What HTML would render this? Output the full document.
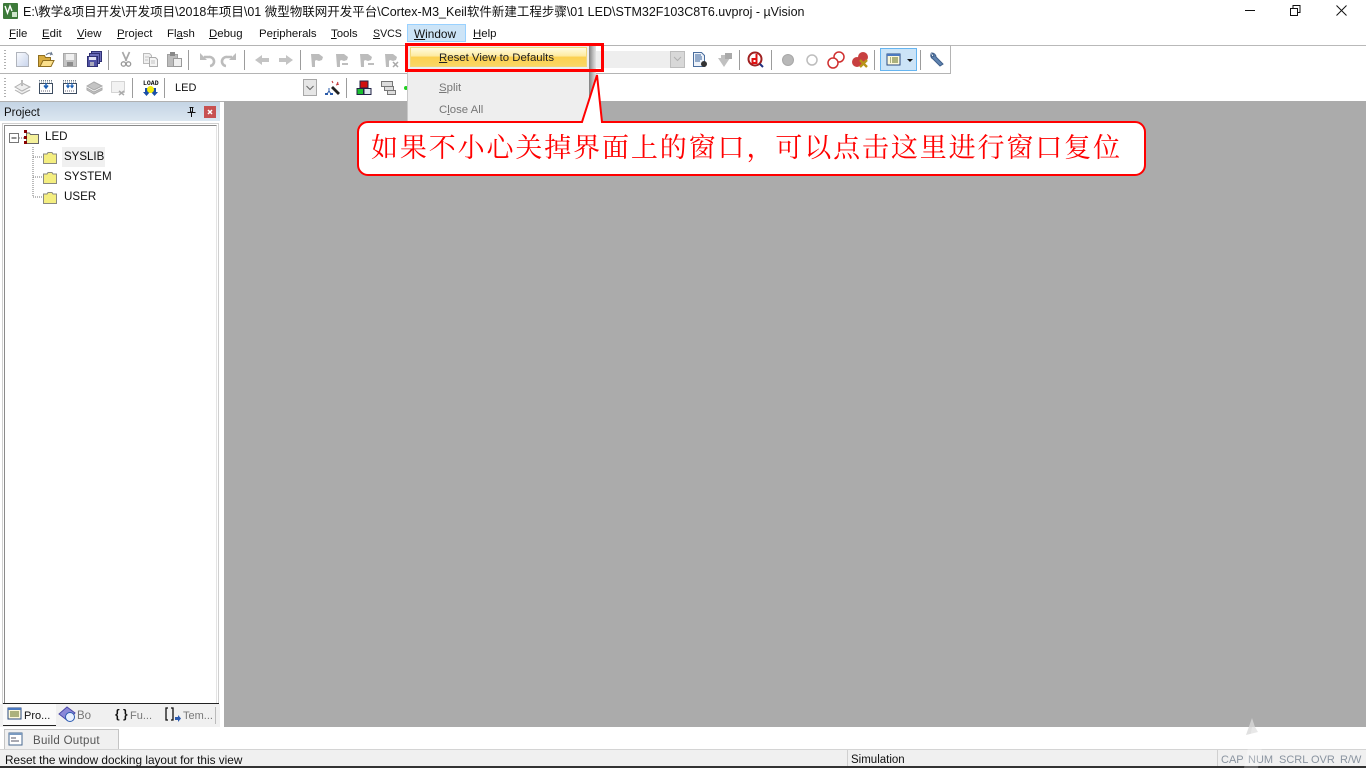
<!DOCTYPE html>
<html><head><meta charset="utf-8"><style>
html,body{margin:0;padding:0;width:1366px;height:768px;overflow:hidden;background:#fff}
body{position:relative;font-family:"Liberation Sans","Noto Sans CJK SC",sans-serif;font-size:11.4px;color:#111}
.a{position:absolute;white-space:nowrap;line-height:16px}
.b{position:absolute}
u{text-decoration-thickness:1px;text-underline-offset:1px}
</style></head><body>
<div class="b" style="left:0;top:45px;width:951px;height:1px;background:#b4b4b4"></div>
<div class="b" style="left:951px;top:45px;width:415px;height:1px;background:#b9b9b9"></div>
<div class="b" style="left:0;top:73px;width:951px;height:1px;background:#b4b4b4"></div>
<div class="b" style="left:950px;top:45px;width:1px;height:29px;background:#b4b4b4"></div>
<div class="b" style="left:224px;top:101px;width:1142px;height:626px;background:#ababab"></div>
<div class="b" style="left:0;top:101px;width:224px;height:1px;background:#b0b0b0"></div>
<div class="b" style="left:0;top:102px;width:220px;height:19px;background:linear-gradient(#c4d4e4,#dbe6f0)"></div>
<div class="a" style="left:4px;top:105px;font-size:11.500px">Project</div>
<div class="b" style="left:204px;top:106px;width:12px;height:12px;background:#c75050"></div>
<div class="b" style="left:2px;top:123px;width:217px;height:581px;border:1px solid #d0d0d0;border-bottom:0;box-sizing:border-box;background:#fff"></div>
<div class="b" style="left:4px;top:125px;width:213px;height:578px;border-left:1px solid #8a8a8a;border-top:1px solid #8a8a8a;border-right:1px solid #e4e4e4;box-sizing:border-box;background:#fff"></div>
<div class="b" style="left:3px;top:703px;width:216px;height:1px;background:#222"></div>
<div class="b" style="left:62px;top:147px;width:43px;height:20px;background:#f0f0f0"></div>
<div class="a" style="left:45px;top:129px;font-size:11.600px">LED</div>
<div class="a" style="left:64px;top:149px;font-size:11.500px">SYSLIB</div>
<div class="a" style="left:64px;top:169px;font-size:11.600px">SYSTEM</div>
<div class="a" style="left:64px;top:189px;font-size:11.600px">USER</div>
<div class="b" style="left:0;top:704px;width:220px;height:23px;background:#f0f0f0"></div>
<div class="b" style="left:3px;top:704px;width:53px;height:22px;background:#fafafa;border-bottom:1px solid #222;box-sizing:border-box"></div>
<div class="a" style="left:24px;top:708px;font-size:11px">Pro...</div>
<div class="a" style="left:77px;top:708px;font-size:11.500px;color:#777">Bo</div>
<div class="a" style="left:130px;top:708px;font-size:11px;color:#777">Fu...</div>
<div class="a" style="left:183px;top:708px;font-size:11px;color:#777">Tem...</div>
<div class="a" style="left:115px;top:706px;font-size:12px;font-weight:bold">{ }</div>
<div class="b" style="left:4px;top:729px;width:115px;height:21px;background:#f0f0f0;border:1px solid #c4c4c4;border-bottom:0;box-sizing:border-box"></div>
<div class="a" style="left:33px;top:733px;font-size:11.500px;letter-spacing:.3px;color:#555">Build Output</div>
<div class="b" style="left:0;top:749px;width:1366px;height:17px;background:#f0f0f0;border-top:1px solid #d4d4d4;box-sizing:border-box"></div>
<div class="b" style="left:0;top:766px;width:1366px;height:2px;background:#333"></div>
<div class="a" style="left:5px;top:752px;font-size:11.800px">Reset the window docking layout for this view</div>
<div class="a" style="left:851px;top:752px;font-size:11.500px">Simulation</div>
<div class="b" style="left:847px;top:750px;width:1px;height:16px;background:#d0d0d0"></div>
<div class="b" style="left:1217px;top:750px;width:1px;height:16px;background:#d0d0d0"></div>
<div class="a" style="left:1221px;top:752px;font-size:11px;color:#8a94a0">CAP</div>
<div class="a" style="left:1248px;top:752px;font-size:11px;color:#8a94a0">NUM</div>
<div class="a" style="left:1279px;top:752px;font-size:11px;color:#8a94a0">SCRL</div>
<div class="a" style="left:1311px;top:752px;font-size:11px;color:#8a94a0">OVR</div>
<div class="a" style="left:1340px;top:752px;font-size:11px;color:#8a94a0">R/W</div>

<div class="a" style="left:23px;top:4px;font-size:12.500px;color:#111">E:\教学&amp;项目开发\开发项目\2018年项目\01 微型物联网开发平台\Cortex-M3_Keil软件新建工程步骤\01 LED\STM32F103C8T6.uvproj - µVision</div>

<div class="b" style="left:407px;top:24px;width:57px;height:16px;background:#cce4f7;border:1px solid #99d1ff"></div>
<div class="a" style="left:9px;top:26px"><u>F</u>ile</div>
<div class="a" style="left:42px;top:26px"><u>E</u>dit</div>
<div class="a" style="left:77px;top:26px"><u>V</u>iew</div>
<div class="a" style="left:117px;top:26px"><u>P</u>roject</div>
<div class="a" style="left:167px;top:26px">Fl<u>a</u>sh</div>
<div class="a" style="left:209px;top:26px"><u>D</u>ebug</div>
<div class="a" style="left:259px;top:26px">Pe<u>r</u>ipherals</div>
<div class="a" style="left:331px;top:26px"><u>T</u>ools</div>
<div class="a" style="left:373px;top:26px;font-size:10.600px"><u>S</u>VCS</div>
<div class="a" style="left:414px;top:26px;font-size:11.800px"><u>W</u>indow</div>
<div class="a" style="left:473px;top:26px"><u>H</u>elp</div>
<div class="a" style="left:175px;top:80px;font-size:11px">LED</div>

<div class="b" style="left:596px;top:51px;width:75px;height:17px;background:#eee"></div>
<div class="b" style="left:670px;top:51px;width:15px;height:17px;background:#d8d8d8;border:1px solid #bdbdbd;box-sizing:border-box"></div>
<div class="b" style="left:303px;top:79px;width:14px;height:17px;background:#e6e6e6;border:1px solid #a8a8a8;box-sizing:border-box"></div>
<div class="b" style="left:880px;top:48px;width:37px;height:23px;background:#cce4f7;border:1px solid #66b5f0;box-sizing:border-box"></div>

<svg class="b" style="left:0;top:0" width="1366" height="768" viewBox="0 0 1366 768" fill="none">
<defs><linearGradient id="g" x1="0" y1="0" x2="1" y2="1"><stop offset="0" stop-color="#fafbfe"/><stop offset="1" stop-color="#c8d4ec"/></linearGradient></defs>
<!-- app icon -->
<rect x="3" y="3" width="15" height="16" rx="1" fill="#3d7a3a"/><path d="M5 6l2.500 7 2.500-7 2 5" stroke="#fff" stroke-width="1.400"/><path d="M12 12h5v5h-5z" fill="#cfe6cc"/>
<!-- window buttons -->
<path d="M1245 10.500h10" stroke="#111"/>
<path d="M1290.500 8.500h7v7h-7zM1293 8v-2.500h7v7h-2.500" stroke="#111"/>
<path d="M1336.500 5.500l10 10M1346.500 5.500l-10 10" stroke="#111"/>
<!-- grips -->
<path d="M5 50v21M5 78v21" stroke="#b0b0b0" stroke-dasharray="1 2" stroke-width="2"/>
<!-- separators -->
<path d="M108.500 50v20M188.500 50v20M244.500 50v20M300.500 50v20M739.500 50v20M771.500 50v20M874.500 50v20M920.500 50v20M132.500 78v20M164.500 78v20M346.500 78v20" stroke="#9c9c9c"/>
<!-- toolbar1 -->
<path d="M16.500 52.500h9l3 3v11h-12z" fill="url(#g)" stroke="#b0b4bc"/>
<path d="M38.500 55.500h6l1 2h5v9h-12z" fill="#d8ac40" stroke="#8f6f20"/><path d="M40 66.500l3-6h11l-3 6z" fill="#fbe08c" stroke="#8f6f20"/><path d="M46 55q3-3 6-1l-1-2M52 54l-2 1" stroke="#6a7a90"/>
<rect x="63.500" y="53.500" width="13" height="13" fill="#c4c4c4" stroke="#a8a8a8"/><rect x="66" y="54" width="8" height="6" fill="#f0f0f0"/><rect x="67" y="62" width="6" height="4" fill="#8c8c8c"/>
<rect x="91.500" y="51.500" width="10" height="10" fill="#6a6cb8" stroke="#2f3072"/><rect x="89.500" y="53.500" width="10" height="10" fill="#6a6cb8" stroke="#2f3072"/><rect x="87.500" y="56.500" width="10" height="10" fill="#5052a4" stroke="#2f3072"/><rect x="89" y="57" width="7" height="3" fill="#e4e4f6"/><rect x="90" y="62" width="4" height="4" fill="#aab"/>
<path d="M122.500 52l4 9M129.500 52l-4 9" stroke="#a8a8a8" stroke-width="1.700"/><circle cx="123.500" cy="64" r="2.200" stroke="#9a9a9a" stroke-width="1.300"/><circle cx="128.500" cy="64" r="2.200" stroke="#9a9a9a" stroke-width="1.300"/>
<path d="M143.500 53.500h6l2 2v8h-8z" fill="#f0f0f0" stroke="#bbb"/><path d="M149.500 57.500h6l2 2v7h-8z" fill="#f4f4f4" stroke="#aaa"/><path d="M145 57h4M145 60h3M151 61h4M151 63h4" stroke="#c4c4c4"/>
<rect x="167.500" y="54.500" width="10" height="12" fill="#bcbcbc" stroke="#a0a0a0"/><rect x="170" y="52" width="5" height="4" fill="#888"/><rect x="173.500" y="58.500" width="8" height="8" fill="#efefef" stroke="#999"/>
<path d="M204 57h5a4.500 4.500 0 0 1 1 9" stroke="#bcbcbc" stroke-width="2.600"/><path d="M200 53v7h7z" fill="#bcbcbc"/>
<path d="M232 57h-5a4.500 4.500 0 0 0-1 9" stroke="#bcbcbc" stroke-width="2.600"/><path d="M236 53v7h-7z" fill="#bcbcbc"/>
<path d="M255 60l7-5v3h7v4h-7v3z" fill="#c4c4c4"/><path d="M293 60l-7-5v3h-7v4h7v3z" fill="#c4c4c4"/>
<g fill="#bcbcbc"><path d="M311 54h8l4 3-1 3-3 1-3-1-1 1v6h-3z"/><path d="M336 54h8l4 3-1 3-3 1-3-1-1 1v6h-3z"/><path d="M360 54h8l4 3-1 3-3 1-3-1-1 1v6h-3z"/><path d="M385 54h8l4 3-1 3-3 1-3-1-1 1v6h-3z"/></g>
<path d="M342 64h6M374 64h-6M393 62l5 5M398 62l-5 5" stroke="#a8a8a8" stroke-width="1.500"/>
<path d="M693.500 52.500h8l3 3v11h-11z" fill="#eef3fa" stroke="#4a6e9e"/><path d="M695 55h6M695 57h7M695 59h7M695 61h5" stroke="#35609a"/><circle cx="704" cy="64" r="3" fill="#333"/>
<path d="M718 58l6 9 6-9h-3v-3h-6v3z" fill="#c0c0c0"/><rect x="725" y="53" width="7" height="6" fill="#aaa"/>
<circle cx="755" cy="59" r="6.500" fill="#fff" stroke="#a02020" stroke-width="2"/><path d="M756.500 54v9h-4v-4h4" stroke="#e01010" stroke-width="2"/><path d="M760 64l3 3" stroke="#203080" stroke-width="2"/>
<circle cx="788" cy="60" r="5.500" fill="#b8b8b8" stroke="#a8a8a8"/>
<circle cx="812" cy="60" r="5" fill="#fff" stroke="#bdbdbd" stroke-width="1.500"/>
<circle cx="839" cy="57" r="5" fill="#fff" stroke="#d03030" stroke-width="1.500"/><circle cx="833" cy="63" r="5" fill="#fff" stroke="#d03030" stroke-width="1.500"/>
<circle cx="863" cy="57" r="5" fill="#c84040"/><circle cx="857" cy="62" r="5" fill="#c84040"/><path d="M860 60l7 7M867 60l-7 7" stroke="#b89418" stroke-width="2.400"/>
<rect x="887" y="54" width="13" height="11" fill="#fdf8d8" stroke="#2a4a80"/><rect x="887" y="54" width="13" height="2" fill="#4a78c0"/><path d="M890 58h1M892 58h6M890 60h1M892 60h6M890 62h1M892 62h6" stroke="#5a6a20"/>
<path d="M907 59h6l-3 3z" fill="#111"/>
<path d="M931 54a4 4 0 0 0 2 5l7 7 3-2-7-7a4 4 0 0 0-4-4l2 3-2 1z" fill="#5f83b0" stroke="#3f5f8a"/>
<path d="M674 57l3.500 3.500L681 57" stroke="#b0b0b0"/>
<path d="M306.500 86l3.500 3.500L313.500 86" stroke="#666"/>
<!-- toolbar2 -->
<path d="M15 87l7-4 8 4-8 4zM15 90l7 4 8-4" stroke="#b0b0b0" fill="#eeeeee"/><path d="M22 80v6" stroke="#bbb" stroke-width="2"/>
<rect x="39.500" y="83.500" width="13" height="10" fill="#fff" stroke="#3c4c60"/><path d="M39 80.500h14M39 82h14" stroke="#6a7a8a" stroke-dasharray="1 1"/><path d="M46 83v4M44 85.500l2 2.500 2-2.500" stroke="#1a5fb4" stroke-width="1.500"/><path d="M41 91h10" stroke="#667" stroke-dasharray="1 1"/>
<rect x="63.500" y="83.500" width="13" height="10" fill="#fff" stroke="#3c4c60"/><path d="M63 80.500h14M63 82h14" stroke="#6a7a8a" stroke-dasharray="1 1"/><path d="M68 83v4M72 83v4M66.500 85.500l1.500 2 1.500-2M70.500 85.500l1.500 2 1.500-2" stroke="#1a5fb4" stroke-width="1.200"/><path d="M65 91h10" stroke="#667" stroke-dasharray="1 1"/>
<path d="M87 86l7-4 8 4-8 4zM87 88l7 4 8-4v2l-8 4-7-4z" stroke="#aaa" fill="#c4c4c4"/>
<rect x="111.500" y="81.500" width="13" height="11" fill="#f2f2f2" stroke="#b0b0b0" stroke-dasharray="1 1"/><path d="M119 91l5 4M124 91l-5 4" stroke="#aaa" stroke-width="1.500"/>
<text x="143" y="85" font-family="Liberation Mono,monospace" font-size="6.500" font-weight="bold" fill="#111">LOAD</text>
<path d="M145 88h3v4h2l-3.500 4-3.500-4h2zM153 88h3v4h2l-3.500 4-3.500-4h2z" fill="#1a4fa8"/><circle cx="150.500" cy="89.500" r="3.500" fill="#f4ec10"/>
<path d="M331 88l7 7 2-2-7-7z" fill="#222"/><path d="M332 81l1 2M338 82l-1 2M336 85l3-1" stroke="#c03030"/><path d="M329 88v3M327 94l2-3 2 3" stroke="#2a5aa8"/><path d="M325 94h3M330 94h3" stroke="#2a5aa8" stroke-width="2"/>
<rect x="360" y="81" width="8" height="7" fill="#d01010" stroke="#224"/><rect x="357" y="88.500" width="6.500" height="6" fill="#1ac030" stroke="#224"/><rect x="364" y="88.500" width="7" height="6" fill="#dfe8f0" stroke="#224"/>
<path d="M381.500 81.500h11v5h-11zM384.500 86.500h9v4h-9zM387.500 90.500h8v4h-8z" fill="#ddd" stroke="#777"/>
<circle cx="406" cy="88" r="2" fill="#20d020"/>
<!-- tree -->
<rect x="9.500" y="133.500" width="9" height="9" fill="#fff" stroke="#777"/><path d="M11.500 138h5" stroke="#222"/>
<path d="M19 138h5M33 147v50M33 157h10M33 177h10M33 197h10" stroke="#777" stroke-dasharray="1 1"/>
<path d="M26.500 133h3l1 1.500h8v9h-12z" fill="#f4f09a" stroke="#666"/><rect x="24" y="130" width="3" height="3" fill="#800"/><rect x="24" y="136" width="3" height="3" fill="#800"/><rect x="24" y="141" width="3" height="3" fill="#800"/>
<g fill="#f4ee80" stroke="#8a8a80"><path d="M43.500 154h3.500l1-1.500h4l1 1.500h3.500v9.500h-13z"/><path d="M43.500 174h3.500l1-1.500h4l1 1.500h3.500v9.500h-13z"/><path d="M43.500 194h3.500l1-1.500h4l1 1.500h3.500v9.500h-13z"/></g>
<!-- panel -->
<path d="M189.500 107.500h4M190.500 108v4h2v-4M187.500 112.500h8M191.500 113v4" stroke="#111"/>
<path d="M208 110l4 4M212 110l-4 4" stroke="#fff" stroke-width="1.500"/>
<!-- tabs -->
<rect x="8" y="708" width="13" height="11" fill="#fdf8d8" stroke="#2a4a80"/><rect x="8" y="708" width="13" height="2" fill="#4a78c0"/><path d="M10 712h9M10 714h9M10 716h9" stroke="#5a6a20"/>
<path d="M59 714l8-7 8 6-7 8z" fill="#8a88d8" stroke="#4a48a8"/><circle cx="70" cy="717" r="4.500" fill="#e8f0ff" stroke="#2a5ab0"/>
<path d="M168 708h-2v12h2M171 708h2v12h-2" stroke="#111" stroke-width="1.300"/><path d="M175 717h3v-2l3 3.500-3 3.500v-2h-3z" fill="#2a5ab0"/>
<path d="M215.500 707v17" stroke="#bbb"/>
<rect x="9" y="733" width="13" height="12" fill="#fff" stroke="#4a6a90"/><rect x="9" y="733" width="13" height="2" fill="#7a9ac0"/><path d="M11 738h5M11 741h8" stroke="#556"/>
<!-- watermark -->
<path d="M1246 735l6-17 3 9 3 5z" fill="#d8d8d8" opacity=".8"/><path d="M1244 768l8-41 14 0-8 41z" fill="#fff" opacity=".25"/>
</svg>

<!-- dropdown menu -->
<div class="b" style="left:589px;top:46px;width:7px;height:76px;background:linear-gradient(90deg,#808080,#c0c0c0 60%,#e4e4e4)"></div>
<div class="b" style="left:407px;top:44px;width:182px;height:80px;background:#eeeeee;border-left:1px solid #c8c8c8;box-sizing:border-box"></div>
<div class="b" style="left:410px;top:47px;width:177px;height:20px;box-sizing:border-box;border:1px solid #f2d87a;background:linear-gradient(#fffbe0 0,#fdeaa0 45%,#fbd050 50%,#fad764 100%)"></div>
<div class="a" style="left:439px;top:50px;font-size:11.400px;color:#222"><u>R</u>eset View to Defaults</div>
<div class="a" style="left:439px;top:80px;font-size:11.400px;color:#777"><u>S</u>plit</div>
<div class="a" style="left:439px;top:102px;font-size:11.400px;color:#777">C<u>l</u>ose All</div>
<div class="b" style="left:405px;top:43px;width:199px;height:29px;box-sizing:border-box;border:3px solid #f00"></div>

<!-- callout -->
<svg class="b" style="left:0;top:0" width="1366" height="768" viewBox="0 0 1366 768" fill="none">
<path d="M368 122H582L597 75L602 122H1135a10 10 0 0 1 10 10V165a10 10 0 0 1-10 10H368a10 10 0 0 1-10-10V132a10 10 0 0 1 10-10Z" fill="#fff" stroke="#f00" stroke-width="2"/>
</svg>
<div class="a" style="left:371px;top:133px;line-height:30px;font-family:'Liberation Serif','Noto Serif CJK SC',serif;font-size:27px;letter-spacing:1.880px;color:#f00">如果不小心关掉界面上的窗口，可以点击这里进行窗口复位</div>
</body></html>
